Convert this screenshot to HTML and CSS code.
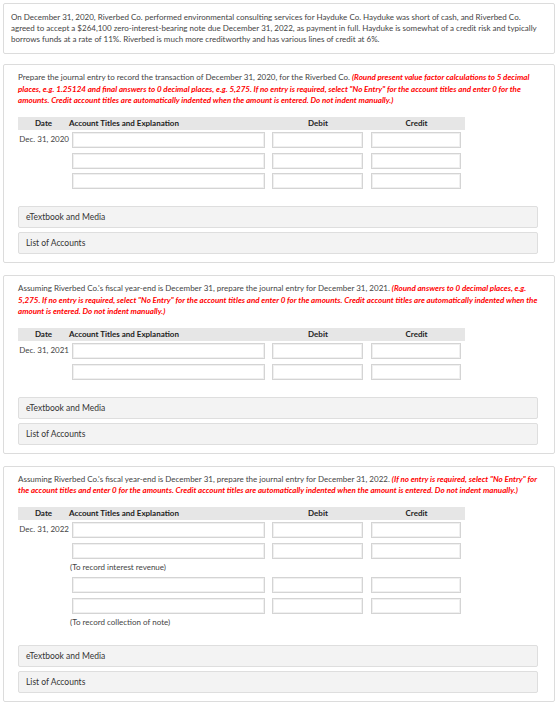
FILE: index.html
```html
<!DOCTYPE html>
<html lang="en">
<head>
  <meta charset="UTF-8" />
  <title>Question | Notes Receivable</title>
  <meta name="viewport" content="width=device-width, initial-scale=1.0" />
  <link rel="stylesheet" href="styles.css">
</head>
<body>
  <section class="card intro">
    On December 31, 2020, Riverbed Co. performed environmental consulting services for Hayduke Co. Hayduke was short of cash, and Riverbed Co. agreed to accept a $264,100 zero-interest-bearing note due December 31, 2022, as payment in full. Hayduke is somewhat of a credit risk and typically borrows funds at a rate of 11%. Riverbed is much more creditworthy and has various lines of credit at 6%.
  </section>

  <!-- Part 1 -->
  <section class="card">
    <p class="prompt">Prepare the journal entry to record the transaction of December 31, 2020, for the Riverbed Co. <em>(Round present value factor calculations to 5 decimal places, e.g. 1.25124 and final answers to 0 decimal places, e.g. 5,275. If no entry is required, select "No Entry" for the account titles and enter 0 for the amounts. Credit account titles are automatically indented when the amount is entered. Do not indent manually.)</em></p>

    <div class="entry">
      <div class="head">
        <span class="c-date">Date</span>
        <span class="c-acct">Account Titles and Explanation</span>
        <span class="c-num">Debit</span>
        <span class="c-num">Credit</span>
      </div>
      <div class="row">
        <span class="c-date">Dec. 31, 2020</span>
        <input class="acct" type="text" /><input class="num" type="text" /><input class="num" type="text" />
      </div>
      <div class="row">
        <span class="c-date"></span>
        <input class="acct" type="text" /><input class="num" type="text" /><input class="num" type="text" />
      </div>
      <div class="row">
        <span class="c-date"></span>
        <input class="acct" type="text" /><input class="num" type="text" /><input class="num" type="text" />
      </div>
    </div>

    <div class="links">
      <div class="bar">eTextbook and Media</div>
      <div class="bar">List of Accounts</div>
    </div>
  </section>

  <!-- Part 2 -->
  <section class="card">
    <p class="prompt">Assuming Riverbed Co.'s fiscal year-end is December 31, prepare the journal entry for December 31, 2021. <em>(Round answers to 0 decimal places, e.g. 5,275. If no entry is required, select "No Entry" for the account titles and enter 0 for the amounts. Credit account titles are automatically indented when the amount is entered. Do not indent manually.)</em></p>

    <div class="entry">
      <div class="head">
        <span class="c-date">Date</span>
        <span class="c-acct">Account Titles and Explanation</span>
        <span class="c-num">Debit</span>
        <span class="c-num">Credit</span>
      </div>
      <div class="row">
        <span class="c-date">Dec. 31, 2021</span>
        <input class="acct" type="text" /><input class="num" type="text" /><input class="num" type="text" />
      </div>
      <div class="row">
        <span class="c-date"></span>
        <input class="acct" type="text" /><input class="num" type="text" /><input class="num" type="text" />
      </div>
    </div>

    <div class="links">
      <div class="bar">eTextbook and Media</div>
      <div class="bar">List of Accounts</div>
    </div>
  </section>

  <!-- Part 3 -->
  <section class="card">
    <p class="prompt">Assuming Riverbed Co.'s fiscal year-end is December 31, prepare the journal entry for December 31, 2022. <em>(If no entry is required, select "No Entry" for the account titles and enter 0 for the amounts. Credit account titles are automatically indented when the amount is entered. Do not indent manually.)</em></p>

    <div class="entry">
      <div class="head">
        <span class="c-date">Date</span>
        <span class="c-acct">Account Titles and Explanation</span>
        <span class="c-num">Debit</span>
        <span class="c-num">Credit</span>
      </div>
      <div class="row">
        <span class="c-date">Dec. 31, 2022</span>
        <input class="acct" type="text" /><input class="num" type="text" /><input class="num" type="text" />
      </div>
      <div class="row">
        <span class="c-date"></span>
        <input class="acct" type="text" /><input class="num" type="text" /><input class="num" type="text" />
      </div>
      <div class="note">(To record interest revenue)</div>
      <div class="row">
        <span class="c-date"></span>
        <input class="acct" type="text" /><input class="num" type="text" /><input class="num" type="text" />
      </div>
      <div class="row">
        <span class="c-date"></span>
        <input class="acct" type="text" /><input class="num" type="text" /><input class="num" type="text" />
      </div>
      <div class="note">(To record collection of note)</div>
    </div>

    <div class="links">
      <div class="bar">eTextbook and Media</div>
      <div class="bar">List of Accounts</div>
    </div>
  </section>
</body>
</html>
```

FILE: styles.css
```css
body {
  font-family: Lato, 'Open Sans', sans-serif;
  font-size: 8px;
  line-height: 11.5px;
  color: #444;
  background: #fff;
  margin: 3px 5px 3px 3px;
}

.card {
  border: 1px solid #dcdcdc;
  border-radius: 2px;
  padding: 7px 16px 8px 14px;
  margin-bottom: 12px;
}

.intro {
  line-height: 11px;
  padding: 8px 8px 8px 7px;
  margin-bottom: 10px;
}

.prompt {
  margin: 0 0 10.5px 0;
}

.prompt em {
  color: #f00;
  font-weight: bold;
}

/* journal entry grid */
.entry {
  width: 447px;
}

.head,
.row {
  display: grid;
  grid-template-columns: 54px 200px 99px 94px;
  align-items: center;
}

.head {
  background: #e6e6e6;
  height: 13px;
  font-weight: bold;
  color: #222;
}

.head .c-date {
  text-align: center;
  padding-right: 3px;
}

.head .c-acct {
  margin-left: -3px;
}

.head .c-num {
  text-align: center;
  padding-right: 7px;
}

.head .c-num:last-child {
  padding-right: 3px;
}

.row {
  height: 16px;
  margin-top: 4.5px;
}

.head + .row {
  margin-top: 2px;
}

.row .c-date {
  text-align: right;
  padding-right: 3px;
  white-space: nowrap;
}

input {
  box-sizing: border-box;
  height: 16px;
  border: 1px solid #d4d4d4;
  box-shadow: inset 0 0 0 1px #f0f0f0;
  background: #fff;
  padding: 0 3px;
  margin: 0;
  font: inherit;
}

input.acct {
  width: 193px;
}

input.num {
  width: 91px;
}

input.num:last-child {
  width: 90px;
}

.note {
  height: 11px;
  line-height: 11px;
  padding: 3px 0 0 52px;
}

.links {
  margin-top: 17px;
  display: flex;
  flex-direction: column;
  gap: 4px;
}

.bar {
  background: #f3f3f3;
  border: 1px solid #dedede;
  border-radius: 2px;
  height: 20px;
  line-height: 20px;
  padding-left: 7px;
  font-size: 8.5px;
  color: #333;
}
```
